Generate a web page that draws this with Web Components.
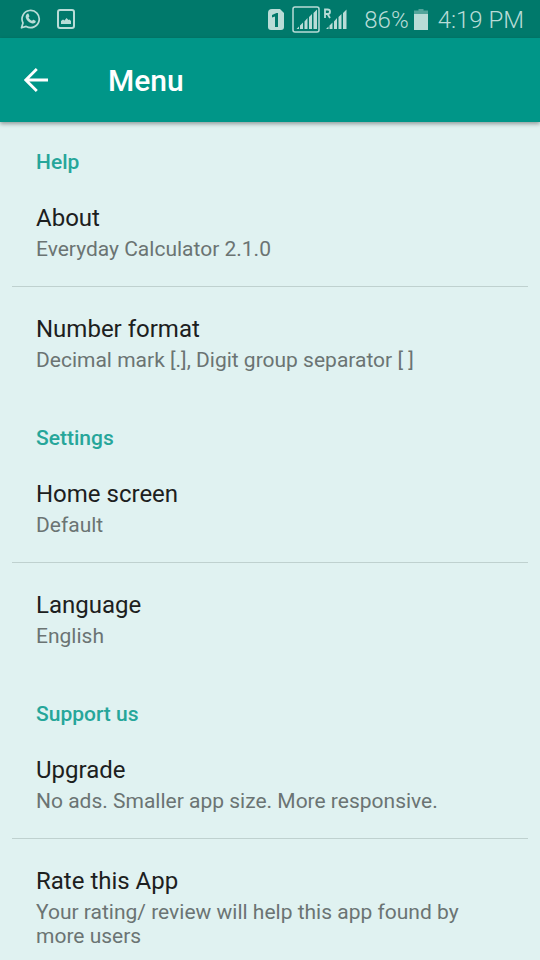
<!DOCTYPE html>
<html lang="en">
<head>
<meta charset="utf-8">
<meta name="viewport" content="width=device-width, initial-scale=1">
<title>Menu</title>
<style>
    body {
        margin: 0;
        background: #e0f2f1;
        font-family: Roboto, "Liberation Sans", sans-serif;
    }
</style>
</head>
<body>

<template id="status-bar-template">
    <style>
        :host {
            display: flex;
            align-items: center;
            justify-content: space-between;
            height: 38px;
            padding: 0 16px 0 20px;
            background: #00796b;
            color: #b9dcd7;
            font-size: 24px;
            font-weight: 300;
            line-height: 36px;
            white-space: nowrap;
        }

        div {
            display: flex;
            align-items: center;
        }

        span {
            padding-top: 2px;
        }

        .notifications {
            gap: 16px;
        }

        .signals {
            margin-right: 17px;
        }

        .battery {
            gap: 5px;
            margin-right: 10px;
        }

        svg {
            display: block;
            fill: currentColor;
        }
    </style>
    <div class="notifications">
        <svg width="21" height="20" viewBox="0 0 21 20" aria-hidden="true">
            <path d="M1.5 18.8 L3 14 A8.6 8.6 0 1 1 6.2 17.4 Z" fill="none" stroke="currentColor" stroke-width="1.7" stroke-linejoin="round"/>
            <path d="M7.2 4.8 C7.6 4.4 8.3 4.4 8.6 5 L9.4 6.9 C9.6 7.4 8.8 8 8.5 8.5 C9.2 10 10.5 11.2 12 11.8 C12.5 11.5 13 10.6 13.5 10.8 L15.4 11.8 C16 12.1 15.7 13.1 15.2 13.7 C14.3 14.5 12.9 14.8 11.6 14.3 C8.9 13.4 6.8 11.4 5.8 8.7 C5.4 7.3 6 5.7 7.2 4.8 Z"/>
        </svg>
        <svg width="18" height="20" viewBox="0 0 18 20" aria-hidden="true">
            <rect x="1" y="1" width="16" height="18" rx="2" fill="none" stroke="currentColor" stroke-width="2"/>
            <path d="M4 15 V12 L6 10.5 L7.500 11.500 L9.500 9 L11.500 11 L12.500 10.500 L14 12 V15 Z"/>
        </svg>
    </div>
    <div class="system">
        <div class="signals">
            <svg width="80" height="28" viewBox="0 0 80 28" aria-hidden="true">
                <path d="M5 4 H13 L17 8 V22 Q17 25 14 25 H4 Q1 25 1 22 V8 Q1 4 5 4 Z"/>
                <path d="M8 22 V11.5 L5 12.5 V10 L9.5 8 H11 V22 Z" fill="#00796b"/>
                <rect x="26" y="2" width="26" height="25" rx="2" fill="none" stroke="currentColor" stroke-width="1.5"/>
                <path d="M29.500 24 L32 21.500 V24 Z M33 20.500 L36 17.500 V24 H33 Z M37.500 16.500 L40.500 13 V24 H37.500 Z M42 12 L45 9 V24 H42 Z M46.500 8 L50 4.500 V24 H46.500 Z"/>
                <path d="M59 24 L61.500 21.500 V24 Z M62.500 20.500 L65.500 17.500 V24 H62.500 Z M67 16.500 L70 13 V24 H67 Z M71.500 12 L74.500 9 V24 H71.500 Z M76 8 L79.500 4.500 V24 H76 Z"/>
                <path d="M58 13 V4.500 H60.500 Q63 4.500 63 6.700 Q63 9 60.500 9 H58 M60.500 9 L63 13" fill="none" stroke="currentColor" stroke-width="1.8"/>
            </svg>
        </div>
        <div class="battery">
            <span>86%</span>
            <svg width="14" height="21" viewBox="0 0 14 21" aria-hidden="true">
                <path d="M0 1.500 H4.500 V0 H9.500 V1.500 H14 V5 H0 Z" opacity="0.45"/>
                <path d="M0 5 H14 V21 H0 Z"/>
            </svg>
        </div>
        <span>4:19 PM</span>
    </div>
</template>

<template id="app-bar-template">
    <style>
        :host {
            display: flex;
            align-items: center;
            gap: 48px;
            height: 84px;
            padding: 0 12px;
            background: #009688;
            color: #fff;
            box-shadow: 0 2px 4px rgba(0, 0, 0, 0.35);
            position: relative;
        }

        button {
            width: 48px;
            height: 48px;
            padding: 0;
            border: 0;
            background: none;
            color: inherit;
            display: grid;
            place-items: center;
        }

        h1 {
            margin: 0;
            padding-top: 2px;
            font-size: 30px;
            font-weight: 500;
            line-height: 36px;
        }
    </style>
    <button type="button" aria-label="Back">
        <svg width="24" height="24" viewBox="0 0 24 24" fill="none" stroke="currentColor" stroke-width="2.8">
            <path d="M24 12 H2 M12.800 1 L1.800 12 L12.800 23"/>
        </svg>
    </button>
    <h1><slot></slot></h1>
</template>

<template id="menu-section-template">
    <style>
        :host {
            display: block;
        }

        h2 {
            margin: 0;
            padding: 28px 36px 2px;
            color: #26a69a;
            font-size: 21px;
            font-weight: 500;
            line-height: 24px;
        }

        ::slotted(menu-item:not(:last-child)) {
            --divider: #bfd1cf;
        }
    </style>
    <h2></h2>
    <slot></slot>
</template>

<template id="menu-item-template">
    <style>
        :host {
            display: block;
            margin: 0 12px;
            border-bottom: 1px solid var(--divider, transparent);
        }

        button {
            display: flex;
            flex-direction: column;
            gap: 5px;
            width: 100%;
            padding: 28px 24px 25px;
            border: 0;
            background: none;
            font: inherit;
            text-align: left;
        }

        .title {
            color: #1c2020;
            font-size: 24px;
            line-height: 28px;
        }

        .summary {
            color: #6b7473;
            font-size: 21px;
            line-height: 24px;
        }
    </style>
    <button type="button">
        <span class="title"></span>
        <span class="summary"><slot></slot></span>
    </button>
</template>

<template id="menu-screen-template">
    <style>
        :host {
            display: flex;
            flex-direction: column;
            height: 100vh;
        }

        main {
            flex: 1;
            min-height: 0;
            overflow-y: auto;
            scrollbar-width: none;
        }
    </style>
    <slot name="header"></slot>
    <main><slot></slot></main>
</template>

<menu-screen>
    <status-bar slot="header"></status-bar>
    <app-bar slot="header">Menu</app-bar>
    <menu-section heading="Help">
        <menu-item heading="About">Everyday Calculator 2.1.0</menu-item>
        <menu-item heading="Number format">Decimal mark [.], Digit group separator [ ]</menu-item>
    </menu-section>
    <menu-section heading="Settings">
        <menu-item heading="Home screen">Default</menu-item>
        <menu-item heading="Language">English</menu-item>
    </menu-section>
    <menu-section heading="Support us">
        <menu-item heading="Upgrade">No ads. Smaller app size. More responsive.</menu-item>
        <menu-item heading="Rate this App">Your rating/ review will help this app found by more users</menu-item>
    </menu-section>
</menu-screen>

<script>
    class TemplateElement extends HTMLElement {

        constructor() {
            super();

            let template = document.querySelector("#" + this.localName + "-template");

            this.shadow = this.attachShadow({mode: "open"});
            this.shadow.appendChild(template.content.cloneNode(true));
        }

    }

    class StatusBar extends TemplateElement {}

    class AppBar extends TemplateElement {

        constructor() {
            super();

            this.shadow.querySelector("button").addEventListener("click", function() {
                history.back();
            });
        }

    }

    class MenuScreen extends TemplateElement {}

    class MenuSection extends TemplateElement {

        connectedCallback() {
            this.shadow.querySelector("h2").textContent = this.getAttribute("heading");
        }

    }

    class MenuItem extends TemplateElement {

        connectedCallback() {
            this.shadow.querySelector(".title").textContent = this.getAttribute("heading");
        }

    }

    customElements.define("status-bar", StatusBar);
    customElements.define("app-bar", AppBar);
    customElements.define("menu-screen", MenuScreen);
    customElements.define("menu-section", MenuSection);
    customElements.define("menu-item", MenuItem);
</script>
</body>
</html>
